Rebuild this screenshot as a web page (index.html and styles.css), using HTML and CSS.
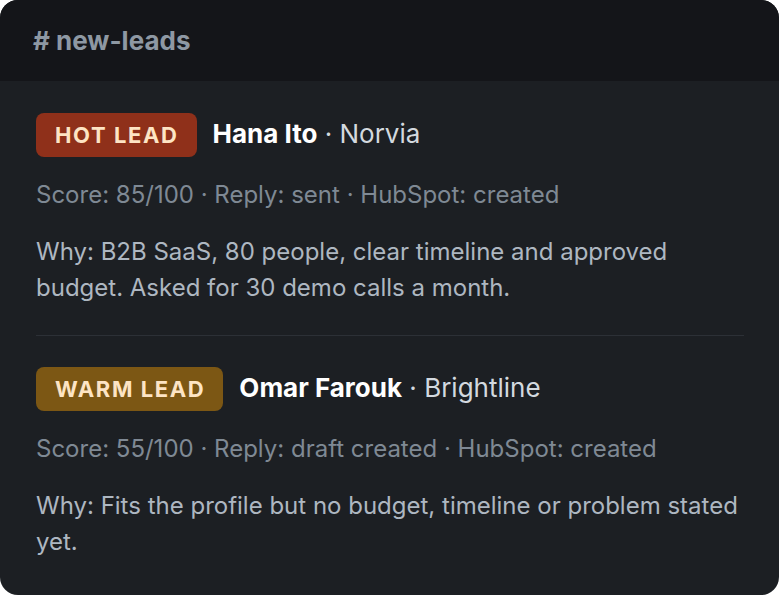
FILE: index.html
```html
<!DOCTYPE html>
<html>
<head>
<meta charset="utf-8">
<link rel="stylesheet" href="styles.css">
</head>
<body>
<div class="card">
  <div class="channel"># new-leads</div>
  <div class="list">
    <div class="lead">
      <div class="lead-head">
        <span class="badge badge-hot">HOT LEAD</span>
        <span class="who"><span class="name">Hana Ito</span> <span class="company">· Norvia</span></span>
      </div>
      <div class="meta">Score: 85/100 · Reply: sent · HubSpot: created</div>
      <div class="why">Why: B2B SaaS, 80 people, clear timeline and approved budget. Asked for 30 demo calls a month.</div>
    </div>
    <div class="lead">
      <div class="lead-head">
        <span class="badge badge-warm">WARM LEAD</span>
        <span class="who"><span class="name">Omar Farouk</span> <span class="company">· Brightline</span></span>
      </div>
      <div class="meta">Score: 55/100 · Reply: draft created · HubSpot: created</div>
      <div class="why">Why: Fits the profile but no budget, timeline or problem stated yet.</div>
    </div>
  </div>
</div>
</body>
</html>
```
FILE: styles.css
```css
html, body {
  margin: 0;
  padding: 0;
  background: #ffffff;
}
body {
  font-family: Inter, "Noto Sans", sans-serif;
}
.card {
  width: 779px;
  height: 595px;
  border-radius: 18px;
  overflow: hidden;
  background: #1c1f23;
  display: flex;
  flex-direction: column;
}
.channel {
  height: 81px;
  box-sizing: border-box;
  background: #141519;
  color: #8e98a3;
  font-size: 26px;
  font-weight: 700;
  padding: 0 33px;
  display: flex;
  align-items: center;
}
.list {
  padding: 0 35px 0 36px;
}
.lead {
  padding: 32px 0 29px;
}
.lead + .lead {
  border-top: 1px solid #2c3036;
  padding-top: 31px;
}
.lead-head {
  display: flex;
  align-items: center;
  height: 44px;
}
.badge {
  height: 44px;
  box-sizing: border-box;
  display: inline-flex;
  align-items: center;
  padding: 0 18px 0 19px;
  border-radius: 8px;
  font-size: 22px;
  font-weight: 700;
  letter-spacing: 1.6px;
  color: #fde4c4;
  margin-right: 16px;
}
.badge-hot { background: #8f301a; }
.badge-warm { background: #7c5714; }
.who {
  font-size: 26px;
  padding-bottom: 4px;
}
.name {
  color: #ffffff;
  font-weight: 700;
}
.company {
  color: #d3d9df;
}
.meta {
  margin-top: 23px;
  font-size: 24px;
  line-height: 30px;
  color: #7f8994;
}
.why {
  margin-top: 24px;
  font-size: 24px;
  line-height: 36px;
  color: #aeb7c1;
}
```
